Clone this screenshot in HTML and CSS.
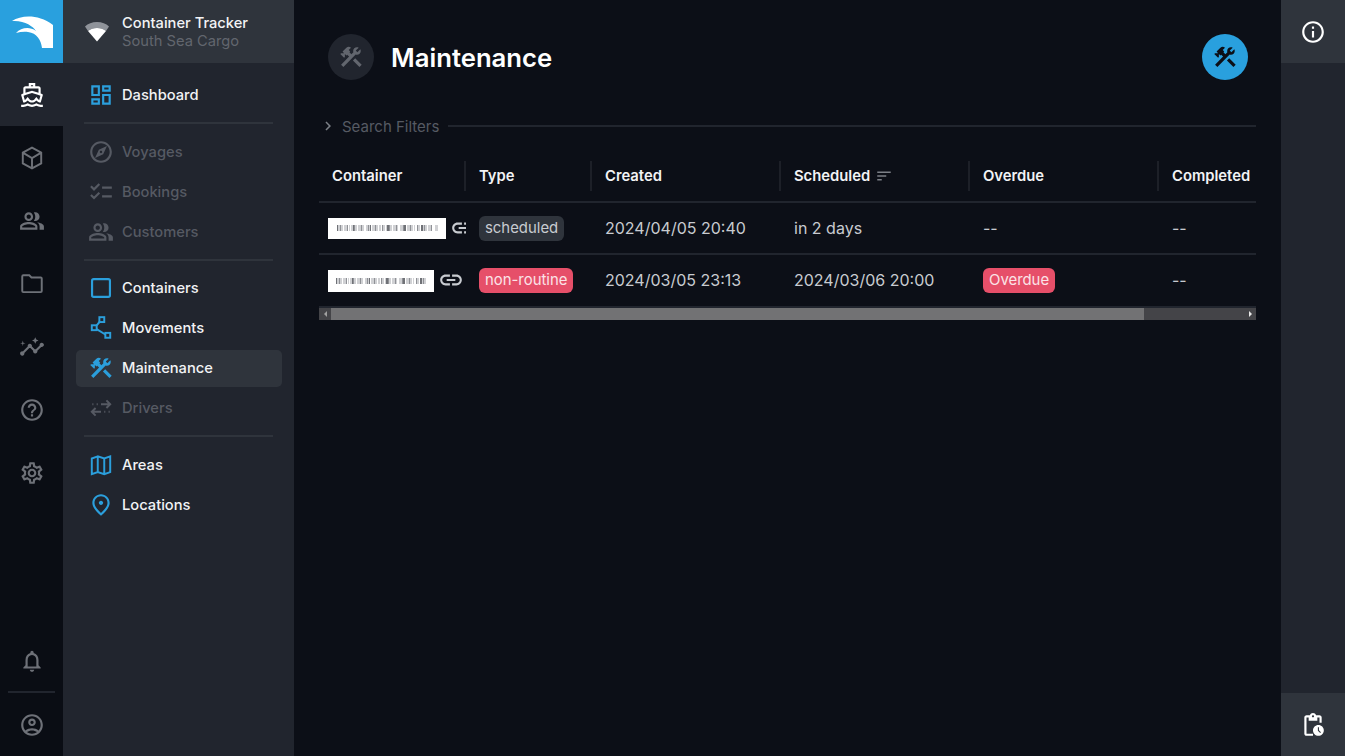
FILE: index.html
```html
<!DOCTYPE html>
<html lang="en">
<head>
    <meta charset="UTF-8">
    <meta name="viewport" content="width=device-width, initial-scale=1.0">
    <title>Maintenance</title>
    <link rel="stylesheet" href="styles.css">
</head>
<body>
    <!-- Shared icons -->
    <svg class="icon-defs" aria-hidden="true">
        <symbol id="i-tools" viewBox="0 0 24 24"><path d="M13.78 15.3l6 6 2.11-2.16-6-6-2.11 2.16z"/><path d="M17.5 10c1.93 0 3.5-1.57 3.5-3.5 0-.58-.16-1.12-.41-1.6l-2.7 2.7-1.49-1.49 2.7-2.7c-.48-.25-1.02-.41-1.6-.41C15.57 3 14 4.57 14 6.5c0 .41.08.8.21 1.16l-1.85 1.85-1.78-1.78.71-.71-1.41-1.41L12 3.49c-1.17-1.17-3.07-1.17-4.24 0L4.22 7.03l1.41 1.41H2.81l-.71.71 3.54 3.54.71-.71V9.15l1.41 1.41.71-.71 1.78 1.78-7.41 7.41 2.12 2.12L16.34 9.79c.36.13.75.21 1.16.21z"/></symbol>
        <symbol id="i-group" viewBox="0 0 24 24"><path d="M16.67 13.13C18.04 14.06 19 15.32 19 17v3h4v-3c0-2.18-3.57-3.47-6.33-3.87zM15 12c2.21 0 4-1.79 4-4s-1.79-4-4-4c-.47 0-.91.1-1.33.24C14.5 5.27 15 6.58 15 8s-.5 2.73-1.33 3.76c.42.14.86.24 1.33.24zM9 12c2.21 0 4-1.79 4-4s-1.79-4-4-4-4 1.79-4 4 1.79 4 4 4zm0-6c1.1 0 2 .9 2 2s-.9 2-2 2-2-.9-2-2 .9-2 2-2zM9 13c-2.67 0-8 1.34-8 4v3h16v-3c0-2.66-5.33-4-8-4zm6 5H3v-.99C3.2 16.29 6.3 15 9 15s5.8 1.29 6 2v1z"/></symbol>
        <symbol id="i-link" viewBox="0 0 24 24"><path d="M3.9 12c0-1.71 1.39-3.1 3.1-3.1h4V7H7c-2.76 0-5 2.24-5 5s2.24 5 5 5h4v-1.9H7c-1.71 0-3.1-1.39-3.1-3.1zM8 13h8v-2H8v2zm9-6h-4v1.9h4c1.71 0 3.1 1.39 3.1 3.1s-1.39 3.1-3.1 3.1h-4V17h4c2.76 0 5-2.24 5-5s-2.24-5-5-5z"/></symbol>
    </svg>

    <!-- Icon rail -->
    <nav class="rail">
        <div class="rail-logo">
            <svg width="63" height="63" viewBox="0 0 63 63"><path fill="#fff" d="M12 21C22 15 38 14 53 25V48H42C41 40 37 33 28 32 24 31.500 20 32 16 33 21 28 29 26 36 31 33 26 24 20 12 21z"/></svg>
        </div>
        <a class="rail-item rail-item-active">
            <svg class="icon" viewBox="0 0 24 24"><path fill-rule="evenodd" d="M20 21c-1.390 0-2.780-.47-4-1.320-2.440 1.710-5.560 1.710-8 0C6.780 20.530 5.390 21 4 21H2v2h2c1.380 0 2.740-.35 4-.99 2.520 1.290 5.480 1.290 8 0 1.260.65 2.620.99 4 .99h2v-2h-2zM3.950 19H4c1.600 0 3.020-.88 4-2 .98 1.120 2.400 2 4 2s3.020-.88 4-2c.98 1.120 2.400 2 4 2h.05l1.890-6.680c.08-.26.06-.54-.06-.78s-.34-.42-.6-.5L20 10.620V6c0-1.100-.9-2-2-2h-3V1H9v3H6c-1.100 0-2 .9-2 2v4.620l-1.290.42c-.26.08-.48.26-.6.5s-.15.52-.06.78L3.950 19zM6 6h12v3.970L12 8 6 9.970V6zM11 3h2v1h-2zM12 10.110l5.380 1.770 2.390.78-1.120 3.970c-.54-.3-.94-.71-1.140-.94L16 13.960l-1.510 1.720c-.34.4-1.280 1.320-2.490 1.320s-2.150-.92-2.490-1.320L8 13.960l-1.510 1.720c-.2.23-.6.63-1.140.93l-1.130-3.960 2.400-.79L12 10.110z"/></svg>
        </a>
        <a class="rail-item">
            <svg class="icon icon-line" viewBox="0 0 24 24"><path d="M12 2.500 3.500 7v10l8.500 4.500 8.500-4.500V7zM3.500 7l8.500 5 8.500-5M12 12v9.500"/></svg>
        </a>
        <a class="rail-item"><svg class="icon"><use href="#i-group"/></svg></a>
        <a class="rail-item">
            <svg class="icon icon-line" viewBox="0 0 24 24"><path d="M3 18.500V5a1 1 0 0 1 1-1h5.500l2 2H20a1 1 0 0 1 1 1v11.500a1 1 0 0 1-1 1H4a1 1 0 0 1-1-1z"/></svg>
        </a>
        <a class="rail-item">
            <svg class="icon" viewBox="0 0 24 24"><path d="M21 8c-1.450 0-2.260 1.440-1.930 2.510l-3.550 3.560c-.3-.09-.74-.09-1.040 0l-2.550-2.550C12.270 10.450 11.460 9 10 9c-1.450 0-2.270 1.440-1.930 2.520l-4.560 4.550C2.440 15.740 1 16.550 1 18c0 1.100.9 2 2 2 1.450 0 2.260-1.440 1.930-2.510l4.550-4.560c.3.09.74.09 1.040 0l2.550 2.550C12.730 16.550 13.540 18 15 18c1.450 0 2.270-1.440 1.930-2.520l3.560-3.550c1.070.33 2.510-.48 2.510-1.930 0-1.100-.9-2-2-2z"/><path d="M15 9l.94-2.070L18 6l-2.060-.93L15 3l-.92 2.070L12 6l2.080.93zM3.500 11L4 9l2-.5L4 8l-.5-2L3 8l-2 .5L3 9z"/></svg>
        </a>
        <a class="rail-item">
            <svg class="icon" viewBox="0 0 24 24"><path d="M11 18h2v-2h-2v2zm1-16C6.480 2 2 6.480 2 12s4.480 10 10 10 10-4.480 10-10S17.520 2 12 2zm0 18c-4.410 0-8-3.590-8-8s3.590-8 8-8 8 3.590 8 8-3.590 8-8 8zm0-14c-2.210 0-4 1.790-4 4h2c0-1.100.9-2 2-2s2 .9 2 2c0 2-3 1.750-3 5h2c0-2.250 3-2.500 3-5 0-2.210-1.790-4-4-4z"/></svg>
        </a>
        <a class="rail-item">
            <svg class="icon" viewBox="0 0 24 24"><path d="M19.430 12.980c.04-.32.07-.64.07-.98 0-.34-.03-.66-.07-.98l2.110-1.650c.19-.15.24-.42.12-.64l-2-3.460c-.09-.16-.26-.25-.44-.25-.06 0-.12.01-.17.03l-2.490 1c-.52-.4-1.080-.73-1.690-.98l-.38-2.650C14.460 2.180 14.250 2 14 2h-4c-.25 0-.46.18-.49.42l-.38 2.650c-.61.25-1.170.59-1.690.98l-2.490-1c-.06-.02-.12-.03-.18-.03-.17 0-.34.09-.43.25l-2 3.460c-.13.22-.07.49.12.64l2.110 1.650c-.04.32-.07.65-.07.98 0 .33.03.66.07.98l-2.110 1.650c-.19.15-.24.42-.12.64l2 3.460c.09.16.26.25.44.25.06 0 .12-.01.17-.03l2.490-1c.52.4 1.080.73 1.690.98l.38 2.650c.03.24.24.42.49.42h4c.25 0 .46-.18.49-.42l.38-2.650c.61-.25 1.170-.59 1.690-.98l2.490 1c.06.02.12.03.18.03.17 0 .34-.09.43-.25l2-3.460c.12-.22.07-.49-.12-.64l-2.110-1.650zm-1.980-1.710c.04.31.05.52.05.73 0 .21-.02.43-.05.73l-.14 1.130.89.7 1.080.84-.7 1.210-1.270-.51-1.040-.42-.9.68c-.43.32-.84.56-1.250.73l-1.060.43-.16 1.130-.2 1.350h-1.400l-.19-1.350-.16-1.130-1.060-.43c-.43-.18-.83-.41-1.230-.71l-.91-.7-1.060.43-1.270.51-.7-1.210 1.080-.84.89-.7-.14-1.130c-.03-.31-.05-.54-.05-.74s.02-.43.05-.73l.14-1.130-.89-.7-1.080-.84.7-1.210 1.270.51 1.040.42.9-.68c.43-.32.84-.56 1.250-.73l1.060-.43.16-1.130.2-1.350h1.390l.19 1.350.16 1.130 1.060.43c.43.18.83.41 1.230.71l.91.7 1.060-.43 1.270-.51.7 1.210-1.070.85-.89.7.14 1.130zM12 8c-2.210 0-4 1.790-4 4s1.790 4 4 4 4-1.790 4-4-1.790-4-4-4zm0 6c-1.100 0-2-.9-2-2s.9-2 2-2 2 .9 2 2-.9 2-2 2z"/></svg>
        </a>
        <div class="rail-bottom">
            <a class="rail-item rail-item-bell">
                <svg class="icon" viewBox="0 0 24 24"><path d="M12 22c1.100 0 2-.9 2-2h-4c0 1.100.9 2 2 2zm6-6v-5c0-3.070-1.630-5.640-4.500-6.320V4c0-.83-.67-1.500-1.500-1.500s-1.500.67-1.500 1.500v.68C7.640 5.360 6 7.920 6 11v5l-2 2v1h16v-1l-2-2zm-2 1H8v-6c0-2.480 1.510-4.500 4-4.500s4 2.020 4 4.500v6z"/></svg>
            </a>
            <div class="rail-divider"></div>
            <a class="rail-item">
                <svg class="icon" viewBox="0 0 24 24"><path d="M12 2C6.480 2 2 6.480 2 12s4.480 10 10 10 10-4.480 10-10S17.520 2 12 2zM7.350 18.500C8.660 17.560 10.260 17 12 17s3.340.56 4.650 1.500c-1.310.94-2.910 1.500-4.650 1.500s-3.340-.56-4.650-1.500zm10.790-1.380C16.450 15.800 14.320 15 12 15s-4.450.8-6.140 2.120C4.700 15.730 4 13.950 4 12c0-4.420 3.580-8 8-8s8 3.580 8 8c0 1.950-.7 3.730-1.860 5.120z"/><path d="M12 6c-1.930 0-3.500 1.570-3.500 3.500S10.070 13 12 13s3.500-1.570 3.500-3.500S13.930 6 12 6zm0 5c-.83 0-1.500-.67-1.500-1.500S11.170 8 12 8s1.500.67 1.500 1.500S12.830 11 12 11z"/></svg>
            </a>
        </div>
    </nav>

    <!-- Section menu -->
    <aside class="menu">
        <div class="menu-header">
            <svg class="menu-signal" width="26" height="21" viewBox="0 0 26 21"><path fill="#8f939a" d="M1 5.500C4 2.500 8 1 13 1s9 1.500 12 4.500l-3 4.500C19.500 8 16.500 7 13 7S6.500 8 4 10z"/><path fill="#fff" d="M4 10c2.500-2 5.500-3 9-3s6.500 1 9 3l-9 10.500z"/></svg>
            <div>
                <div class="menu-title">Container Tracker</div>
                <div class="menu-subtitle">South Sea Cargo</div>
            </div>
        </div>
        <div class="menu-body">
            <a class="menu-item">
                <svg class="icon icon-blue" viewBox="0 0 24 24"><path d="M19 5v2h-4V5h4M9 5v6H5V5h4m10 8v6h-4v-6h4M9 17v2H5v-2h4M21 3h-8v6h8V3zM11 3H3v10h8V3zm10 8h-8v10h8V11zm-10 4H3v6h8v-6z"/></svg>
                Dashboard
            </a>
            <div class="menu-divider"></div>
            <a class="menu-item menu-item-off">
                <svg class="icon" viewBox="0 0 24 24"><path d="M12 2C6.480 2 2 6.480 2 12s4.480 10 10 10 10-4.480 10-10S17.520 2 12 2zm0 18c-4.410 0-8-3.590-8-8s3.590-8 8-8 8 3.590 8 8-3.590 8-8 8zm-5.500-2.500l7.510-3.490L17.500 6.500 9.990 9.990 6.500 17.500zm5.500-6.600c.61 0 1.100.49 1.100 1.100s-.49 1.100-1.100 1.100-1.100-.49-1.100-1.100.49-1.100 1.100-1.100z"/></svg>
                Voyages
            </a>
            <a class="menu-item menu-item-off">
                <svg class="icon" viewBox="0 0 24 24"><path d="M22 7h-9v2h9V7zm0 8h-9v2h9v-2zM5.540 11L2 7.460l1.410-1.410 2.120 2.120 4.240-4.240 1.410 1.410L5.540 11zm0 8L2 15.460l1.410-1.410 2.120 2.120 4.240-4.240 1.410 1.410L5.540 19z"/></svg>
                Bookings
            </a>
            <a class="menu-item menu-item-off">
                <svg class="icon"><use href="#i-group"/></svg>
                Customers
            </a>
            <div class="menu-divider"></div>
            <a class="menu-item">
                <svg class="icon icon-line icon-blue icon-box" viewBox="0 0 24 24"><rect x="3.750" y="3.750" width="16.500" height="16.500" rx="1.500"/></svg>
                Containers
            </a>
            <a class="menu-item">
                <svg class="icon icon-line icon-blue" viewBox="0 0 24 24"><rect x="10.500" y="2" width="4.500" height="4.500"/><rect x="3.500" y="9.500" width="4.500" height="4.500"/><rect x="16" y="16.500" width="4.500" height="4.500"/><path d="M11 6 8 9.500M8 13l8 5"/></svg>
                Movements
            </a>
            <a class="menu-item menu-item-active">
                <svg class="icon icon-blue"><use href="#i-tools"/></svg>
                Maintenance
            </a>
            <a class="menu-item menu-item-off">
                <svg class="icon icon-line" viewBox="0 0 24 24"><path d="M12 8.500h8M17 5l3.500 3.500L17 12M12 15.500H4M7 12l-3.500 3.500L7 19M4 8.500h1M8 8.500h1M15 15.500h1M19 15.500h1"/></svg>
                Drivers
            </a>
            <div class="menu-divider"></div>
            <a class="menu-item">
                <svg class="icon icon-line icon-blue" viewBox="0 0 24 24"><path d="M9 4 3.500 6v14.500L9 18.500l6 2 5.500-2V4L15 6zM9 4v14.500M15 6v14.500"/></svg>
                Areas
            </a>
            <a class="menu-item">
                <svg class="icon icon-blue" viewBox="0 0 24 24"><path d="M12 12c-1.100 0-2-.9-2-2s.9-2 2-2 2 .9 2 2-.9 2-2 2zm6-1.800C18 6.570 15.350 4 12 4s-6 2.570-6 6.200c0 2.340 1.950 5.440 6 9.140 4.050-3.700 6-6.800 6-9.140zM12 2c4.200 0 8 3.220 8 8.200 0 3.320-2.670 7.250-8 11.800-5.330-4.550-8-8.480-8-11.800C4 5.220 7.800 2 12 2z"/></svg>
                Locations
            </a>
        </div>
    </aside>

    <!-- Page content -->
    <main class="main">
        <header class="page-header">
            <div class="page-badge"><svg class="icon"><use href="#i-tools"/></svg></div>
            <h1>Maintenance</h1>
            <button class="page-action"><svg class="icon"><use href="#i-tools"/></svg></button>
        </header>

        <div class="filters">
            <svg class="filters-arrow" width="18" height="18" viewBox="0 0 24 24"><path d="M8.590 16.590 13.170 12 8.590 7.410 10 6l6 6-6 6z"/></svg>
            <span>Search Filters</span>
            <div class="filters-line"></div>
        </div>

        <div class="table-wrap">
            <table class="grid">
                <thead>
                    <tr>
                        <th class="col-container"><div>Container</div></th>
                        <th class="col-type"><div>Type</div></th>
                        <th class="col-date"><div>Created</div></th>
                        <th class="col-date">
                            <div>Scheduled
                                <svg class="sort-icon" viewBox="0 0 24 24"><path d="M3 18h6v-2H3v2zM3 6v2h18V6H3zm0 7h12v-2H3v2z"/></svg>
                            </div>
                        </th>
                        <th class="col-date"><div>Overdue</div></th>
                        <th class="col-date"><div>Completed</div></th>
                    </tr>
                </thead>
                <tbody>
                    <tr>
                        <td>
                            <div class="code-cell">
                                <div class="code-img code-img-long"><span></span></div>
                                <svg class="link-icon"><use href="#i-link"/></svg>
                            </div>
                        </td>
                        <td><span class="tag">scheduled</span></td>
                        <td>2024/04/05 20:40</td>
                        <td>in 2 days</td>
                        <td>--</td>
                        <td>--</td>
                    </tr>
                    <tr>
                        <td>
                            <div class="code-cell">
                                <div class="code-img"><span></span></div>
                                <svg class="link-icon"><use href="#i-link"/></svg>
                            </div>
                        </td>
                        <td><span class="tag tag-red">non-routine</span></td>
                        <td>2024/03/05 23:13</td>
                        <td>2024/03/06 20:00</td>
                        <td><span class="tag tag-red">Overdue</span></td>
                        <td>--</td>
                    </tr>
                </tbody>
            </table>
        </div>

        <div class="scrollbar">
            <div class="scroll-btn scroll-btn-left"></div>
            <div class="scroll-track"><div class="scroll-thumb"></div></div>
            <div class="scroll-btn scroll-btn-right"></div>
        </div>
    </main>

    <!-- Right panel -->
    <aside class="side">
        <a class="side-btn">
            <svg class="icon icon-white" viewBox="0 0 24 24"><path d="M11 7h2v2h-2zm0 4h2v6h-2zm1-9C6.480 2 2 6.480 2 12s4.480 10 10 10 10-4.480 10-10S17.520 2 12 2zm0 18c-4.410 0-8-3.590-8-8s3.590-8 8-8 8 3.590 8 8-3.590 8-8 8z"/></svg>
        </a>
        <a class="side-btn">
            <svg class="icon icon-white" viewBox="0 0 24 24"><path d="M17 12c-2.760 0-5 2.240-5 5s2.240 5 5 5 5-2.240 5-5-2.240-5-5-5zm1.650 7.350L16.500 17.200V14h1v2.790l1.850 1.850-.7.710zM18 3h-3.180C14.400 1.840 13.300 1 12 1s-2.400.84-2.820 2H6c-1.100 0-2 .9-2 2v15c0 1.100.9 2 2 2h6v-2H6V5h2v3h8V5h2v5h2V5c0-1.100-.9-2-2-2zm-6 2c-.55 0-1-.45-1-1s.45-1 1-1 1 .45 1 1-.45 1-1 1z"/></svg>
        </a>
    </aside>
</body>
</html>
```

FILE: styles.css
```css
* {
    box-sizing: border-box;
}

body {
    margin: 0;
    height: 100vh;
    display: flex;
    overflow: hidden;
    background-color: #0c0f17;
    color: #c8cbd0;
    font-family: Inter, "Liberation Sans", sans-serif;
    font-size: 15px;
}

.icon-defs {
    display: none;
}

.icon {
    width: 26px;
    height: 26px;
    flex: none;
    fill: currentColor;
}

.icon-line {
    fill: none;
    stroke: currentColor;
    stroke-width: 1.800;
}

.icon-box {
    stroke-width: 2;
}

.icon-blue {
    color: #2b9fdc;
}

.icon-white {
    color: #fff;
}

/* Icon rail */
.rail {
    width: 63px;
    flex: none;
    display: flex;
    flex-direction: column;
    background-color: #0a0d14;
    color: #6e7178;
}

.rail-logo {
    height: 63px;
    background-color: #29a0de;
}

.rail-logo svg {
    display: block;
}

.rail-item {
    height: 63px;
    flex: none;
    display: flex;
    align-items: center;
    justify-content: center;
}

.rail-item-active {
    background-color: #21252e;
    color: #fff;
}

.rail-item-bell {
    height: 62px;
    padding-top: 2px;
}

.rail-bottom {
    margin-top: auto;
}

.rail-divider {
    height: 2px;
    margin: 0 8px;
    background-color: #21252e;
}

/* Section menu */
.menu {
    width: 231px;
    flex: none;
    background-color: #21252e;
    font-size: 14.700px;
}

.menu-header {
    height: 63px;
    display: flex;
    align-items: center;
    gap: 12px;
    padding-left: 21px;
    background-color: #2f343c;
}

.menu-title {
    color: #f2f3f5;
    font-weight: 500;
    line-height: 18px;
}

.menu-subtitle {
    color: #62666e;
    line-height: 18px;
}

.menu-body {
    display: flex;
    flex-direction: column;
    padding: 12px 12px 0 13px;
}

.menu-item {
    height: 37px;
    flex: none;
    margin: 1.500px 0;
    display: flex;
    align-items: center;
    gap: 8px;
    padding-left: 12px;
    border-radius: 5px;
    color: #f2f3f5;
    font-weight: 500;
}

.menu-item-off {
    color: #565a63;
}

.menu-item-active {
    background-color: #2f343c;
}

.menu-divider {
    height: 2px;
    flex: none;
    margin: 7px 9px 7.500px 8px;
    background-color: #2f343c;
}

/* Page content */
.main {
    flex: 1;
    min-width: 0;
    padding: 34px 25px 0;
}

.page-header {
    display: flex;
    align-items: center;
    padding: 0 8px 0 9px;
}

.page-header h1 {
    margin: 0 0 0 17px;
    color: #fff;
    font-size: 25.700px;
    font-weight: 600;
}

.page-badge,
.page-action {
    width: 46px;
    height: 46px;
    display: flex;
    align-items: center;
    justify-content: center;
    padding: 0;
    border: none;
    border-radius: 50%;
}

.page-badge {
    background-color: #21252e;
    color: #62666e;
}

.page-action {
    margin-left: auto;
    background-color: #29a0de;
    color: #0c0f17;
}

.filters {
    height: 20px;
    margin-top: 36px;
    display: flex;
    align-items: center;
    color: #565a63;
}

.filters span {
    margin-left: 5px;
}

.filters-arrow {
    fill: #7c8087;
}

.filters-line {
    flex: 1;
    height: 2px;
    margin-left: 9px;
    background-color: #21252e;
}

.table-wrap {
    margin-top: 14px;
    overflow: hidden;
}

.grid {
    width: 1029px;
    table-layout: fixed;
    border-collapse: separate;
    border-spacing: 0;
}

.col-container {
    width: 147px;
}

.col-type {
    width: 126px;
}

.col-date {
    width: 189px;
}

.grid th {
    height: 53px;
    padding: 0;
    border-bottom: 2px solid #21252e;
    color: #f2f3f5;
    font-size: 14.800px;
    font-weight: 600;
    text-align: left;
}

.grid th div {
    height: 30px;
    display: flex;
    align-items: center;
    gap: 5px;
    padding-left: 13px;
    border-right: 2px solid #1d2028;
}

.grid th:last-child div {
    border-right: none;
}

.sort-icon {
    width: 18px;
    height: 18px;
    fill: #7c8087;
}

.grid td {
    height: 52px;
    padding: 0 0 0 13px;
    border-bottom: 2px solid #21252e;
    font-size: 16px;
    overflow: hidden;
    white-space: nowrap;
}

.grid tr:last-child td {
    height: 51px;
    border-bottom: 1px solid transparent;
}

.grid td:first-child {
    padding-left: 9px;
}

.code-cell {
    display: flex;
    align-items: center;
    gap: 4px;
}

.code-img {
    width: 106px;
    height: 22px;
    flex: none;
    margin-top: 2px;
    display: flex;
    align-items: center;
    justify-content: center;
    background-color: #fff;
}

.code-img-long {
    width: 118px;
    height: 21px;
    margin-top: 0;
}

/* Stands in for the blurred code picture */
.code-img span {
    width: 87%;
    height: 6px;
    background-color: #d0d1d4;
    background-image:
        repeating-linear-gradient(90deg, #fff 0 1px, transparent 1px 4px, #8f9196 4px 5px, transparent 5px 7px),
        repeating-linear-gradient(90deg, #6f7176 0 2px, transparent 2px 11px, #fff 11px 13px, transparent 13px 17px);
    filter: blur(0.500px);
}

.link-icon {
    width: 26px;
    height: 26px;
    flex: none;
    fill: #c8cbd0;
}

.tag {
    display: inline-block;
    height: 25px;
    padding: 0 6px;
    border-radius: 6px;
    background-color: #2f343c;
    font-size: 14.900px;
    line-height: 25px;
    vertical-align: middle;
}

.tag-red {
    background-color: #e64f69;
    color: #fbe3e7;
}

/* Drawn scrollbar, the table is wider than the page */
.scrollbar {
    height: 14px;
    display: flex;
    border-top: 2px solid #21252e;
    background-color: #444448;
}

.scroll-btn {
    width: 12px;
    flex: none;
    display: flex;
    align-items: center;
    justify-content: center;
}

.scroll-btn::before {
    content: "";
    border-style: solid;
    border-width: 3px 0 3px 3px;
    border-color: transparent transparent transparent #e8e8e8;
}

.scroll-btn-left::before {
    border-width: 3px 3px 3px 0;
    border-color: transparent #a0a0a0 transparent transparent;
}

.scroll-track {
    flex: 1;
}

.scroll-thumb {
    width: 89%;
    height: 100%;
    background-color: #727274;
}

/* Right panel */
.side {
    width: 64px;
    flex: none;
    display: flex;
    flex-direction: column;
    justify-content: space-between;
    background-color: #21252e;
}

.side-btn {
    height: 63px;
    display: flex;
    align-items: center;
    justify-content: center;
    background-color: #2f343c;
}
```
